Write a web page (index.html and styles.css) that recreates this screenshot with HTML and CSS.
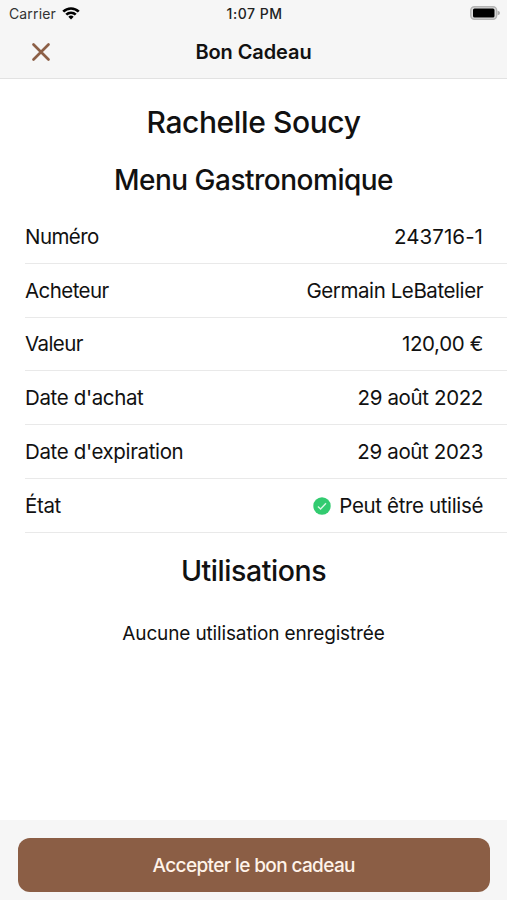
FILE: index.html
```html
<!DOCTYPE html>
<html lang="fr">
<head>
<meta charset="utf-8">
<title>Bon Cadeau</title>
<link rel="stylesheet" href="styles.css">
</head>
<body>
<header class="top">
  <div class="status">
    <div class="carrier"><span class="t-carrier">Carrier</span>
      <svg class="wifi" viewBox="0 0 18 14"><path d="M0.3 4.7A12.5 12.5 0 0 1 17.7 4.7L15.8 6.6A9.8 9.8 0 0 0 2.2 6.6Z"/><path d="M3.3 7.7A8.2 8.2 0 0 1 14.7 7.7L12.8 9.6A5.5 5.5 0 0 0 5.2 9.6Z"/><path d="M6.3 10.7A3.9 3.9 0 0 1 11.7 10.7L9 13.4Z"/></svg>
    </div>
    <span class="t-time">1:07 PM</span>
    <svg class="battery" viewBox="0 0 30 14"><rect x=".8" y=".8" width="25.8" height="12.4" rx="3.6" fill="#ddd" stroke="#b4b4b4" stroke-width="1.5"/><rect x="3" y="2.5" width="21.5" height="9" rx="1.5"/><path d="M27.6 4.7Q30 5.3 30 7T27.6 9.3Z" fill="#aaa"/></svg>
  </div>
  <nav class="nav">
    <svg class="close" viewBox="0 0 20 20"><path d="M2.5 2.5L17.5 17.5M17.5 2.5L2.5 17.5"/></svg>
    <h1><span class="t-nav">Bon Cadeau</span></h1>
  </nav>
</header>
<main>
  <h2 class="name"><span class="t-name">Rachelle Soucy</span></h2>
  <h2 class="menu"><span class="t-menu">Menu Gastronomique</span></h2>
  <dl>
    <div class="row"><dt class="short">Numéro</dt><dd class="number">243716-1</dd></div>
    <div class="row"><dt class="short">Acheteur</dt><dd class="buyer">Germain LeBatelier</dd></div>
    <div class="row"><dt class="short">Valeur</dt><dd>120,00 €</dd></div>
    <div class="row"><dt>Date d'achat</dt><dd>29 août 2022</dd></div>
    <div class="row"><dt>Date d'expiration</dt><dd>29 août 2023</dd></div>
    <div class="row"><dt>État</dt><dd class="state"><svg class="check" viewBox="0 0 18 18"><circle cx="9" cy="9" r="8.7"/><path d="M4.9 9.5L7.6 12L13 6.2"/></svg><span>Peut être utilisé</span></dd></div>
  </dl>
  <h2 class="uses"><span class="t-uses">Utilisations</span></h2>
  <p><span class="t-empty">Aucune utilisation enregistrée</span></p>
</main>
<footer><button><span class="t-button">Accepter le bon cadeau</span></button></footer>
</body>
</html>
```
FILE: styles.css
```css
* { box-sizing: border-box; margin: 0; padding: 0; }
body { height: 900px; display: flex; flex-direction: column; overflow: hidden; background: #fff; color: #111; font: 20px/24px Inter, sans-serif; }
span { white-space: nowrap; }
.top { height: 79px; background: #f6f6f6; border-bottom: 1px solid #e2e2e2; }
.status { height: 27px; display: grid; grid-template-columns: 1fr auto 1fr; align-items: center; padding: 0 7px 0 9px; font-size: 14px; }
.carrier { display: flex; align-items: center; gap: 6px; }
.t-carrier { letter-spacing: .14px; color: #333; }
.wifi { width: 18px; height: 14px; margin-top: -1px; }
.battery { width: 30px; height: 14px; justify-self: end; margin-top: -1px; }
.t-time { font-weight: 500; letter-spacing: .5px; color: #222; }
.nav { height: 50px; display: grid; grid-template-columns: 64px 1fr 64px; align-items: center; }
.close { width: 20px; height: 20px; margin-left: 31px; fill: none; stroke: #8c5f46; stroke-width: 2.7; stroke-linecap: round; }
h1 { font-size: 20px; font-weight: 600; letter-spacing: -.1px; text-align: center; }
main { flex: 1; text-align: center; }
h2 { font-size: 28.5px; font-weight: 500; line-height: 36px; letter-spacing: -.45px; }
.name { margin-top: 25px; font-size: 30px; letter-spacing: -.4px; }
.menu { margin-top: 22px; font-size: 28px; letter-spacing: -.5px; }
dl { margin: 12px 0 0 25px; font-size: 20.5px; letter-spacing: -.36px; }
.row { height: 53.8px; display: flex; justify-content: space-between; align-items: center; padding: 1px 24px 0 0; border-bottom: 1px solid #e9e9e9; white-space: nowrap; }
.short { letter-spacing: -.57px; }
.number { letter-spacing: .05px; }
.buyer { letter-spacing: -.42px; }
.state { display: flex; align-items: center; gap: 8px; }
.check { width: 18px; height: 18px; fill: #32cb70; }
.check path { fill: none; stroke: #d8f8e4; stroke-width: 1.4; }
.uses { margin-top: 20px; }
p { margin-top: 33px; font-size: 19px; letter-spacing: -.14px; }
footer { height: 80px; padding: 17.5px 17px 8px 17.5px; background: #f6f6f6; }
button { display: block; width: 100%; height: 54px; padding-top: 2px; border: 0; border-radius: 12px; background: #8b5e45; color: #fff3e9; font: 500 19px/24px Inter, sans-serif; letter-spacing: -.62px; }
```
